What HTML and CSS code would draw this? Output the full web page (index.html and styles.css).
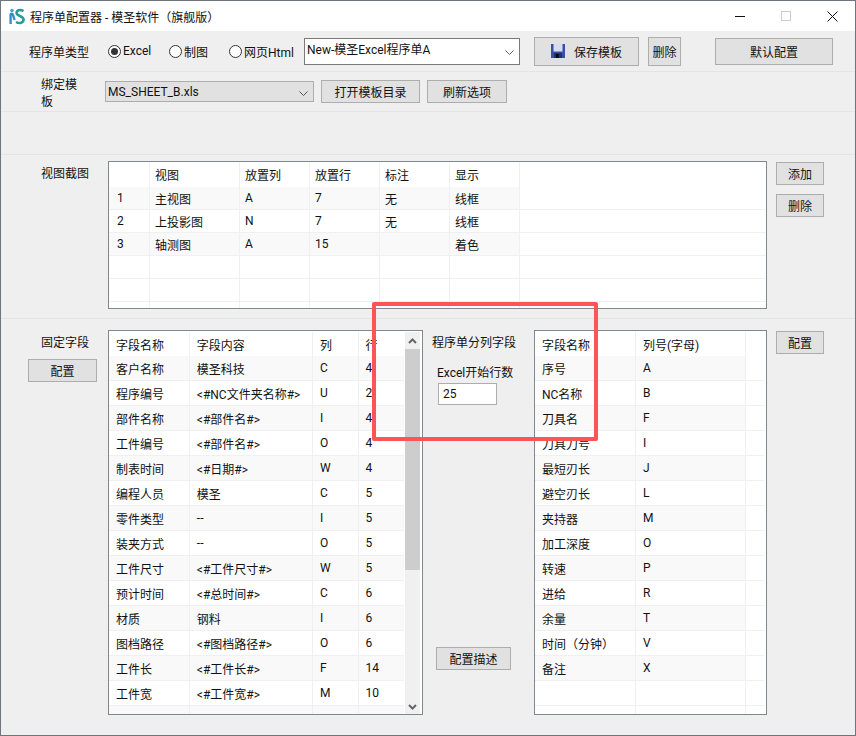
FILE: index.html
```html
<!DOCTYPE html>
<html>
<head>
  <meta charset="UTF-8">
  <title>程序单配置器</title>
  <link rel="stylesheet" href="styles.css">
</head>
<body>
  <div class="window">
    <!-- Title bar -->
    <div class="titlebar">
      <svg class="logo" viewBox="0 0 16 17" width="16" height="17">
        <circle cx="3" cy="2.5" r="1.8" fill="#35a5e0"/>
        <path d="M1.6 16V6.5C1.6 5.5 3.4 5.5 3.8 6.5L5.6 12" fill="none" stroke="#2f8fd0" stroke-width="2.4"/>
        <path d="M14.5 3.2C11 1 7.6 2.2 7.6 5C7.6 8.4 14.6 7.6 14.6 11.6C14.6 15 10.4 16 7 14" fill="none" stroke="#2b9a94" stroke-width="2.6"/>
      </svg>
      <span class="title">程序单配置器 - 模圣软件（旗舰版）</span>
      <div class="win-controls">
        <span class="win-btn"><i class="win-min"></i></span>
        <span class="win-btn"><i class="win-max"></i></span>
        <span class="win-btn">
          <svg viewBox="0 0 11 11" width="11" height="11"><path d="M.5 .5L10.5 10.5M10.5 .5L.5 10.5" stroke="#111" fill="none"/></svg>
        </span>
      </div>
    </div>

    <!-- Template type row -->
    <div class="section row-type">
      <span class="type-label">程序单类型</span>
      <label class="radio radio-a"><i class="dot checked"></i>Excel</label>
      <label class="radio radio-b"><i class="dot"></i>制图</label>
      <label class="radio radio-c"><i class="dot"></i>网页Html</label>
      <div class="combo combo-name">
        <span>New-模圣Excel程序单A</span>
        <svg class="chevron" viewBox="0 0 9 5" width="9" height="5"><path d="M.5 .5L4.5 4.5L8.5 .5" fill="none" stroke="#666"/></svg>
      </div>
      <button class="btn btn-save">
        <svg viewBox="0 0 14 14" width="14" height="14">
          <rect width="14" height="14" fill="#3a4fa8"/>
          <rect x="2.5" y="0" width="9" height="7.5" fill="#d8dcef"/>
          <rect x="3" y="9" width="8" height="5" fill="#23306e"/>
          <rect x="5" y="10" width="2.5" height="4" fill="#050510"/>
        </svg>
        <span>保存模板</span>
      </button>
      <button class="btn btn-del">删除</button>
      <button class="btn btn-default">默认配置</button>
    </div>

    <!-- Bound template row -->
    <div class="section row-bind">
      <span class="bind-label">绑定模板</span>
      <div class="combo combo-sheet">
        <span>MS_SHEET_B.xls</span>
        <svg class="chevron" viewBox="0 0 9 5" width="9" height="5"><path d="M.5 .5L4.5 4.5L8.5 .5" fill="none" stroke="#555"/></svg>
      </div>
      <button class="btn btn-open">打开模板目录</button>
      <button class="btn btn-refresh">刷新选项</button>
    </div>

    <div class="section row-empty"></div>

    <!-- View captures -->
    <div class="section row-views">
      <div class="side"><span class="side-label">视图截图</span></div>
      <div class="grid-box views-box">
        <table class="views">
          <colgroup><col class="v0"><col class="v1"><col class="v2"><col class="v2"><col class="v2"><col class="v2"><col></colgroup>
          <thead><tr><th></th><th>视图</th><th>放置列</th><th>放置行</th><th>标注</th><th>显示</th><th></th></tr></thead>
          <tbody>
            <tr class="alt"><td>1</td><td>主视图</td><td>A</td><td>7</td><td>无</td><td>线框</td><td class="plain"></td></tr>
            <tr><td>2</td><td>上投影图</td><td>N</td><td>7</td><td>无</td><td>线框</td><td class="plain"></td></tr>
            <tr class="alt"><td>3</td><td>轴测图</td><td>A</td><td>15</td><td></td><td>着色</td><td class="plain"></td></tr>
            <tr><td></td><td></td><td></td><td></td><td></td><td></td><td class="plain"></td></tr>
            <tr><td></td><td></td><td></td><td></td><td></td><td></td><td class="plain"></td></tr>
            <tr><td></td><td></td><td></td><td></td><td></td><td></td><td class="plain"></td></tr>
          </tbody>
        </table>
      </div>
      <div class="actions">
        <button class="btn btn-side">添加</button>
        <button class="btn btn-side">删除</button>
      </div>
    </div>

    <!-- Fixed and column fields -->
    <div class="section row-fields">
      <div class="side">
        <span class="side-label">固定字段</span>
        <button class="btn btn-config">配置</button>
      </div>
      <div class="grid-box fixed-box">
        <div class="clip">
          <table class="fields fixed">
            <colgroup><col class="f1"><col class="f2"><col class="f3"><col class="f3"></colgroup>
            <thead><tr><th>字段名称</th><th>字段内容</th><th>列</th><th>行</th></tr></thead>
            <tbody>
              <tr class="alt"><td>客户名称</td><td>模圣科技</td><td>C</td><td>4</td></tr>
              <tr><td>程序编号</td><td>&lt;#NC文件夹名称#&gt;</td><td>U</td><td>2</td></tr>
              <tr class="alt"><td>部件名称</td><td>&lt;#部件名#&gt;</td><td>I</td><td>4</td></tr>
              <tr><td>工件编号</td><td>&lt;#部件名#&gt;</td><td>O</td><td>4</td></tr>
              <tr class="alt"><td>制表时间</td><td>&lt;#日期#&gt;</td><td>W</td><td>4</td></tr>
              <tr><td>编程人员</td><td>模圣</td><td>C</td><td>5</td></tr>
              <tr class="alt"><td>零件类型</td><td>--</td><td>I</td><td>5</td></tr>
              <tr><td>装夹方式</td><td>--</td><td>O</td><td>5</td></tr>
              <tr class="alt"><td>工件尺寸</td><td>&lt;#工件尺寸#&gt;</td><td>W</td><td>5</td></tr>
              <tr><td>预计时间</td><td>&lt;#总时间#&gt;</td><td>C</td><td>6</td></tr>
              <tr class="alt"><td>材质</td><td>钢料</td><td>I</td><td>6</td></tr>
              <tr><td>图档路径</td><td>&lt;#图档路径#&gt;</td><td>O</td><td>6</td></tr>
              <tr class="alt"><td>工件长</td><td>&lt;#工件长#&gt;</td><td>F</td><td>14</td></tr>
              <tr><td>工件宽</td><td>&lt;#工件宽#&gt;</td><td>M</td><td>10</td></tr>
              <tr class="alt"><td></td><td></td><td></td><td></td></tr>
            </tbody>
          </table>
        </div>
        <div class="scrollbar">
          <span class="sb-arrow">
            <svg viewBox="0 0 9 6" width="9" height="6"><path d="M1 5L4.5 1.5L8 5" fill="none" stroke="#666" stroke-width="2"/></svg>
          </span>
          <span class="sb-thumb"></span>
          <span class="sb-arrow sb-end">
            <svg viewBox="0 0 9 6" width="9" height="6"><path d="M1 1L4.5 4.5L8 1" fill="none" stroke="#666" stroke-width="2"/></svg>
          </span>
        </div>
      </div>
      <div class="middle">
        <span class="mid-title">程序单分列字段</span>
        <span class="mid-label">Excel开始行数</span>
        <div class="start-input">25</div>
        <button class="btn btn-describe">配置描述</button>
      </div>
      <div class="grid-box columns-box">
        <div class="clip">
          <table class="fields columns">
            <colgroup><col class="c1"><col class="c2"><col></colgroup>
            <thead><tr><th>字段名称</th><th>列号(字母)</th><th></th></tr></thead>
            <tbody>
              <tr class="alt"><td>序号</td><td>A</td><td class="plain"></td></tr>
              <tr><td>NC名称</td><td>B</td><td class="plain"></td></tr>
              <tr class="alt"><td>刀具名</td><td>F</td><td class="plain"></td></tr>
              <tr><td>刀具刀号</td><td>I</td><td class="plain"></td></tr>
              <tr class="alt"><td>最短刃长</td><td>J</td><td class="plain"></td></tr>
              <tr><td>避空刃长</td><td>L</td><td class="plain"></td></tr>
              <tr class="alt"><td>夹持器</td><td>M</td><td class="plain"></td></tr>
              <tr><td>加工深度</td><td>O</td><td class="plain"></td></tr>
              <tr class="alt"><td>转速</td><td>P</td><td class="plain"></td></tr>
              <tr><td>进给</td><td>R</td><td class="plain"></td></tr>
              <tr class="alt"><td>余量</td><td>T</td><td class="plain"></td></tr>
              <tr><td>时间（分钟）</td><td>V</td><td class="plain"></td></tr>
              <tr class="alt"><td>备注</td><td>X</td><td class="plain"></td></tr>
              <tr><td></td><td></td><td class="plain"></td></tr>
              <tr><td></td><td></td><td class="plain"></td></tr>
            </tbody>
          </table>
        </div>
      </div>
      <div class="actions">
        <button class="btn btn-side">配置</button>
      </div>
    </div>

    <!-- Red annotation drawn over the screenshot -->
    <div class="highlight"></div>
  </div>
</body>
</html>
```

FILE: styles.css
```css
* {
  box-sizing: border-box;
}
html, body {
  margin: 0;
  padding: 0;
}
body {
  width: 856px;
  height: 736px;
  overflow: hidden;
  font-family: Roboto, "Noto Sans CJK SC", sans-serif;
  font-size: 12px;
  color: #111;
}
.window {
  position: relative;
  display: flex;
  flex-direction: column;
  width: 856px;
  height: 736px;
  background-color: #efefef;
  border: 1px solid #70757c;
}

/* title bar */
.titlebar {
  display: flex;
  align-items: center;
  flex: none;
  height: 30px;
  padding-left: 8px;
  background-color: #fff;
}
.logo {
  flex: none;
}
.title {
  margin-left: 5px;
}
.win-controls {
  display: flex;
  margin-left: auto;
}
.win-btn {
  display: flex;
  align-items: center;
  justify-content: center;
  width: 46px;
  height: 30px;
}
.win-min {
  display: block;
  width: 10px;
  height: 1px;
  background-color: #111;
}
.win-max {
  display: block;
  width: 10px;
  height: 10px;
  border: 1px solid #ccc;
}

/* sections */
.section {
  display: flex;
  flex: none;
  border-bottom: 1px solid #e4e4e4;
}
.row-type {
  align-items: center;
  height: 41px;
  padding-left: 28px;
}
.row-bind {
  align-items: center;
  height: 40px;
  padding-left: 40px;
}
.row-empty {
  height: 43px;
}
.row-views {
  height: 164px;
  padding-top: 6px;
}
.row-fields {
  flex: 1;
  padding-top: 11px;
  border-bottom: none;
}

/* controls */
.btn {
  flex: none;
  padding: 0;
  font: inherit;
  color: #111;
  background-color: #e1e1e1;
  border: 1px solid #adadad;
}
.type-label {
  width: 79px;
}
.radio {
  display: flex;
  align-items: center;
  flex: none;
}
.radio-a { width: 61px; }
.radio-b { width: 60px; }
.radio-c { width: 75px; }
.dot {
  position: relative;
  flex: none;
  width: 13px;
  height: 13px;
  margin-right: 2px;
  background-color: #fff;
  border: 1px solid #333;
  border-radius: 50%;
}
.dot.checked::after {
  content: "";
  position: absolute;
  top: 2px;
  left: 2px;
  width: 7px;
  height: 7px;
  background-color: #333;
  border-radius: 50%;
}
.combo {
  position: relative;
  flex: none;
  padding-left: 2px;
  border: 1px solid #7a7a7a;
}
.chevron {
  position: absolute;
  right: 5px;
  top: 9px;
}
.combo-name {
  width: 216px;
  height: 27px;
  padding-top: 1px;
  background-color: #fff;
}
.combo-name .chevron {
  top: 11px;
}
.combo-sheet {
  display: flex;
  align-items: center;
  width: 209px;
  height: 21px;
  margin-left: 17px;
  background-color: #e1e1e1;
  border-color: #adadad;
}
.btn-save {
  display: flex;
  align-items: center;
  justify-content: center;
  gap: 9px;
  width: 105px;
  height: 29px;
  margin-left: 14px;
}
.btn-del {
  width: 33px;
  height: 29px;
  margin-left: 9px;
}
.btn-default {
  width: 118px;
  height: 27px;
  margin-left: 34px;
}
.bind-label {
  width: 47px;
}
.btn-open {
  width: 99px;
  height: 23px;
  margin-left: 7px;
}
.btn-refresh {
  width: 80px;
  height: 23px;
  margin-left: 7px;
}

/* left labels */
.side {
  display: flex;
  flex-direction: column;
  align-items: flex-start;
  flex: none;
  width: 107px;
}
.side-label {
  margin: 3px 0 0 40px;
}
.btn-config {
  width: 69px;
  height: 23px;
  margin: 9px 0 0 27px;
}

/* grids */
.grid-box {
  flex: none;
  background-color: #fff;
  border: 1px solid #82868f;
  overflow: hidden;
}
.views-box {
  width: 659px;
  height: 148px;
}
.fixed-box {
  display: flex;
  width: 315px;
  height: 385px;
  padding: 1px 2px 0 0;
}
.columns-box {
  width: 233px;
  height: 385px;
  padding: 1px 2px 0 0;
}
.clip {
  flex: 1;
  height: 383px;
  overflow: hidden;
}
table {
  width: 100%;
  table-layout: fixed;
  border-collapse: separate;
  border-spacing: 0;
}
th, td {
  overflow: hidden;
  font-weight: normal;
  text-align: left;
  white-space: nowrap;
  border-right: 1px solid #f0f0f0;
}
th:last-child, td:last-child {
  border-right: none;
}
td {
  border-bottom: 1px solid #f0f0f0;
}
tr.alt td {
  background-color: #f9f9f9;
}
tr.alt td.plain {
  background-color: #fff;
}

.views th, .views td {
  padding: 0 0 0 5px;
}
.views th {
  height: 25px;
}
.views td {
  height: 23px;
}
.views .v0 { width: 41px; }
.views .v1 { width: 90px; }
.views .v2 { width: 70px; }
.views td:first-child {
  padding-left: 8px;
}

.fields th, .fields td {
  height: 25px;
  padding: 0 0 0 7px;
}
.fields th {
  height: 24px;
}
.fixed .f1 { width: 80px; }
.fixed .f2 { width: 122px; }
.fixed .f3 { width: 45px; }
.columns .c1 { width: 101px; }
.columns .c2 { width: 110px; }

/* scrollbar */
.scrollbar {
  display: flex;
  flex-direction: column;
  flex: none;
  width: 15px;
  height: 383px;
  margin-left: 1px;
  background-color: #f0f0f0;
}
.sb-arrow {
  display: flex;
  align-items: center;
  justify-content: center;
  flex: none;
  height: 17px;
}
.sb-thumb {
  flex: none;
  height: 221px;
  background-color: #cdcdcd;
}
.sb-end {
  margin-top: auto;
}

/* middle column */
.middle {
  display: flex;
  flex-direction: column;
  align-items: flex-start;
  flex: none;
  width: 111px;
  height: 385px;
  padding-left: 9px;
}
.mid-title {
  margin-top: 3px;
}
.mid-label {
  margin: 13px 0 0 5px;
}
.start-input {
  width: 59px;
  height: 22px;
  margin: 3px 0 0 6px;
  padding: 3px 0 0 4px;
  background-color: #fff;
  border: 1px solid #adadad;
}
.btn-describe {
  width: 75px;
  height: 23px;
  margin: auto 0 45px 4px;
}

/* right buttons */
.actions {
  display: flex;
  flex-direction: column;
  flex: none;
  gap: 9px;
  padding: 1px 0 0 9px;
}
.btn-side {
  width: 48px;
  height: 23px;
}

.highlight {
  position: absolute;
  left: 371px;
  top: 301px;
  width: 226px;
  height: 139px;
  border: 4px solid #fb5555;
  border-radius: 2px;
}
```
